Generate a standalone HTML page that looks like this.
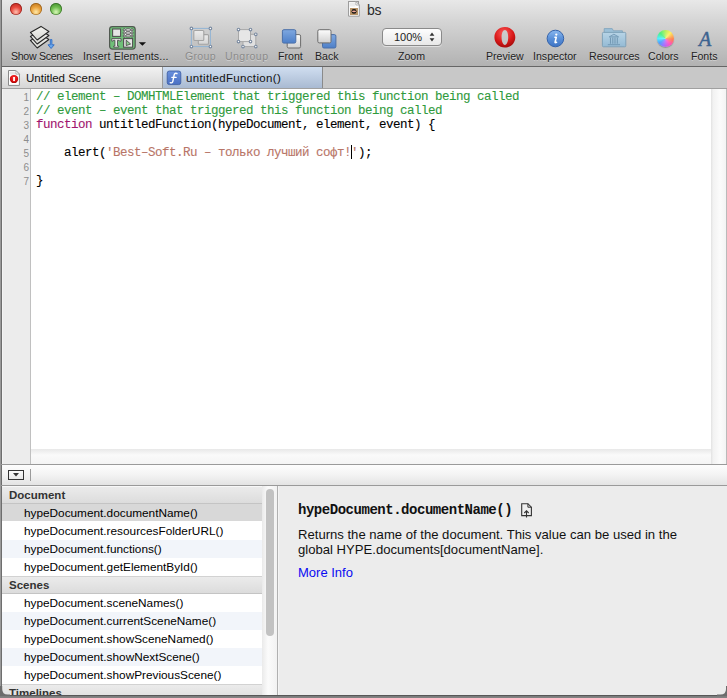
<!DOCTYPE html>
<html><head><meta charset="utf-8">
<style>
*{margin:0;padding:0;box-sizing:border-box}
html,body{width:727px;height:698px;overflow:hidden;background:#ececec;font-family:"Liberation Sans",sans-serif}
.a{position:absolute}
#tb{left:0;top:0;width:727px;height:66px;background:linear-gradient(#e8e8e8,#d6d6d6 30%,#b2b2b2)}
#tbl{left:0;top:66px;width:727px;height:1px;background:#666}
#tabs{left:0;top:67px;width:727px;height:21px;background:#c8c8c8}
#tabl{left:0;top:88px;width:727px;height:1px;background:#a0a0a0}
.lbl{font-size:10.6px;color:#222;white-space:nowrap;top:50px;line-height:12px;text-shadow:0 1px 0 rgba(255,255,255,.35)}
.dis{color:#8a8a8a}
#lb{left:0;top:0;width:2px;height:698px;background:linear-gradient(90deg,#9a9a9a 50%,#6e6e6e 50%)}
#gut{left:2px;top:89px;width:28px;height:375px;background:#ececec;border-left:1px solid #f4f4f4}
#gutb{left:30px;top:89px;width:1px;height:375px;background:#c0c0c0}
#code{left:31px;top:89px;width:680px;height:360px;background:#fff}
#vs{left:711px;top:89px;width:15px;height:375px;background:linear-gradient(90deg,#e2e2e2,#f2f2f2 15%,#fbfbfb 60%,#f4f4f4)}
#vsb{left:726px;top:89px;width:1px;height:375px;background:#bababa}
#hs{left:31px;top:449px;width:680px;height:15px;background:linear-gradient(#e8e8e8,#fafafa 40%,#f4f4f4)}
.ln{position:absolute;left:3px;width:26px;text-align:right;font-size:10px;color:#8c8c8c;font-family:"Liberation Sans",sans-serif}
.cl{position:absolute;left:36px;font-family:"Liberation Mono",monospace;font-size:12.5px;letter-spacing:-0.5px;white-space:pre;color:#000;-webkit-text-stroke:0.1px currentColor}
.cm{color:#2f9a3c}
.kw{color:#a1156f}
.st{color:#b87567}
#bl1{left:0;top:464px;width:727px;height:1px;background:#9a9a9a}
#bbar{left:2px;top:465px;width:725px;height:20px;background:linear-gradient(#fdfdfd,#f3f3f3 50%,#e4e4e4)}
#bl2{left:0;top:485px;width:727px;height:1px;background:#9a9a9a}
#list{left:2px;top:486px;width:260px;height:209px;background:#fff;overflow:hidden}
.hdr{position:absolute;left:0;width:260px;height:18px;background:linear-gradient(#ececec,#dcdcdc);box-shadow:inset 0 1px 0 #f8f8f8;border-bottom:1px solid #c4c4c4;font-weight:bold;font-size:11.5px;color:#333;padding-left:7px;line-height:18px}
.row{position:absolute;left:0;width:260px;height:18px;font-size:11.8px;color:#000;padding-left:22px;line-height:18px;white-space:nowrap}
.alt{background:#f2f5fa}
.sel{background:#d8d8d8}
#vs2{left:262px;top:486px;width:15px;height:209px;background:linear-gradient(90deg,#eaeaea,#fbfbfb 40%,#f2f2f2)}
#thumb{left:266px;top:489px;width:8px;height:147px;border-radius:4px;background:#c2c2c2}
#div{left:277px;top:486px;width:1px;height:209px;background:#b0b0b0}
#rp{left:278px;top:486px;width:449px;height:209px;background:#ececec;border-left:1px solid #f4f4f4}
#bot{left:0;top:695px;width:727px;height:3px;background:linear-gradient(#575757 33%,#7a7a7a 34%,#848484)}
</style></head><body>
<div class="a" id="tb"></div>
<div class="a" id="tbl"></div>
<div class="a" id="tabs"></div>
<div class="a" id="tabl"></div>

<!-- traffic lights -->
<div class="a" style="left:10px;top:3px;width:12px;height:12px;border-radius:50%;background:radial-gradient(circle at 50% 75%,#ffc0b0,#e84a3e 45%,#b01e14);box-shadow:inset 0 0 0 0.8px rgba(110,10,10,.6)"></div>
<div class="a" style="left:30px;top:3px;width:12px;height:12px;border-radius:50%;background:radial-gradient(circle at 50% 75%,#ffe9a8,#eaa23c 45%,#b06812);box-shadow:inset 0 0 0 0.8px rgba(120,70,10,.6)"></div>
<div class="a" style="left:50px;top:3px;width:12px;height:12px;border-radius:50%;background:radial-gradient(circle at 50% 75%,#d8f8b8,#70be50 45%,#347e22);box-shadow:inset 0 0 0 0.8px rgba(30,80,20,.6)"></div>

<!-- title -->
<div class="a" style="left:348px;top:1px;width:11px;height:15px;background:#fff;border:1px solid #999"></div>
<div class="a" style="left:367px;top:2px;font-size:14px;letter-spacing:-0.2px;color:#2a2a2a;line-height:17px">bs</div>

<!-- toolbar labels -->
<div class="a lbl" style="left:11px;letter-spacing:-0.3px">Show Scenes</div>
<div class="a lbl" style="left:83px;letter-spacing:0.18px">Insert Elements...</div>
<div class="a lbl dis" style="left:185px;letter-spacing:0.3px">Group</div>
<div class="a lbl dis" style="left:225px;letter-spacing:0.4px">Ungroup</div>
<div class="a lbl" style="left:278px">Front</div>
<div class="a lbl" style="left:315px">Back</div>
<div class="a lbl" style="left:398px">Zoom</div>
<div class="a lbl" style="left:486px">Preview</div>
<div class="a lbl" style="left:533px">Inspector</div>
<div class="a lbl" style="left:589px">Resources</div>
<div class="a lbl" style="left:648px">Colors</div>
<div class="a lbl" style="left:691px">Fonts</div>

<!-- tabs -->
<div class="a" style="left:2px;top:67px;width:160px;height:21px;background:linear-gradient(#f2f2f2,#d6d6d6)"></div>
<div class="a" style="left:162px;top:67px;width:1px;height:21px;background:#9a9a9a"></div>
<div class="a" style="left:163px;top:67px;width:159px;height:21px;background:linear-gradient(#d0def0,#a9bad2)"></div>
<div class="a" style="left:322px;top:67px;width:1px;height:21px;background:#8a8a8a"></div>
<div class="a" style="left:26px;top:70px;font-size:11.5px;line-height:16px;color:#111">Untitled Scene</div>
<div class="a" style="left:186px;top:70px;font-size:11.5px;line-height:16px;color:#111;letter-spacing:0.35px">untitledFunction()</div>

<div class="a" id="lb"></div>
<div class="a" id="gut"></div>
<div class="a" id="gutb"></div>
<div class="a" id="code"></div>
<div class="a" id="vs"></div>
<div class="a" id="hs"></div>
<div class="a" id="vsb"></div>

<div class="ln" style="top:92px">1</div>
<div class="ln" style="top:106px">2</div>
<div class="ln" style="top:120px">3</div>
<div class="ln" style="top:134px">4</div>
<div class="ln" style="top:148px">5</div>
<div class="ln" style="top:162px">6</div>
<div class="ln" style="top:176px">7</div>

<div class="cl cm" style="top:90px;line-height:14px">// element – DOMHTMLElement that triggered this function being called</div>
<div class="cl cm" style="top:104px;line-height:14px">// event – event that triggered this function being called</div>
<div class="cl" style="top:118px;line-height:14px"><span class="kw">function</span> untitledFunction(hypeDocument, element, event) {</div>
<div class="a" style="left:351px;top:145px;width:1px;height:14px;background:#000"></div>
<div class="cl" style="top:146px;line-height:14px">    alert(<span class="st">'Best–Soft.Ru – только лучший софт!'</span>);</div>
<div class="cl" style="top:174px;line-height:14px">}</div>

<div class="a" id="bl1"></div>
<div class="a" id="bbar"></div>
<div class="a" id="bl2"></div>

<div class="a" id="list">
 <div class="hdr" style="top:0">Document</div>
 <div class="row sel" style="top:18px;height:17px">hypeDocument.documentName()</div>
 <div class="row" style="top:36px">hypeDocument.resourcesFolderURL()</div>
 <div class="row alt" style="top:54px">hypeDocument.functions()</div>
 <div class="row" style="top:72px">hypeDocument.getElementById()</div>
 <div class="hdr" style="top:90px;box-shadow:inset 0 1px 0 #d2d2d2">Scenes</div>
 <div class="row" style="top:108px">hypeDocument.sceneNames()</div>
 <div class="row alt" style="top:126px">hypeDocument.currentSceneName()</div>
 <div class="row" style="top:144px">hypeDocument.showSceneNamed()</div>
 <div class="row alt" style="top:162px">hypeDocument.showNextScene()</div>
 <div class="row" style="top:180px">hypeDocument.showPreviousScene()</div>
 <div class="hdr" style="top:198px;box-shadow:inset 0 1px 0 #d2d2d2">Timelines</div>
</div>
<div class="a" id="vs2"></div>
<div class="a" id="thumb"></div>
<div class="a" id="div"></div>
<div class="a" id="rp"></div>
<div class="a" style="left:298px;top:502px;font-family:'Liberation Mono',monospace;font-weight:bold;font-size:14px;letter-spacing:-0.47px;line-height:16px;color:#111">hypeDocument.documentName()</div>
<div class="a" style="left:298px;top:527px;width:395px;font-size:13.1px;line-height:15px;color:#111">Returns the name of the document. This value can be used in the global HYPE.documents[documentName].</div>
<div class="a" style="left:298px;top:565px;font-size:13px;line-height:15px;color:#0a0af2">More Info</div>

<!-- ICONS -->
<svg class="a" style="left:26px;top:22px" width="32" height="30" viewBox="0 0 32 30">
 <defs><linearGradient id="lg1" x1="0" y1="0" x2="0" y2="1"><stop offset="0" stop-color="#f4f4f0"/><stop offset="1" stop-color="#d8d8d4"/></linearGradient></defs>
 <g stroke="#262626" stroke-width="1.1" stroke-linejoin="round" fill="url(#lg1)">
 <polygon points="15,12.4 22.9,17.5 11.2,26 4.4,18.4"/>
 <polygon points="15,8.4 22.9,13.5 11.2,22 4.4,14.4"/>
 <polygon points="15,4.4 22.9,9.5 11.2,18 4.4,10.4"/>
 </g>
 <path d="M24.3,17.6 h1.6 v5.2 h2.3 l-3.1,3.7 l-3.1,-3.7 h2.3 z" fill="#6aa8ee" stroke="#2f6cc4" stroke-width="0.9" stroke-linejoin="round"/>
</svg>

<svg class="a" style="left:104px;top:22px" width="46" height="30" viewBox="0 0 46 30">
 <rect x="5.6" y="4.6" width="25.6" height="22.5" rx="2.8" fill="#6fbf78" stroke="#505850" stroke-width="1.2"/>
 <rect x="8.6" y="7" width="8" height="7.4" fill="#e4e4e4" stroke="#505050" stroke-width="1.1"/>
 <rect x="19.8" y="6.7" width="8.8" height="8.2" rx="1.5" fill="#f2f2f2"/>
 <g fill="#f4f4f4" stroke="#4a4a4a" stroke-width="0.9"><rect x="21.8" y="6.8" width="4.6" height="2.2" rx="0.9"/><rect x="21.8" y="9.85" width="4.6" height="2.2" rx="0.9"/><rect x="21.8" y="12.9" width="4.6" height="2" rx="0.9"/></g>
 <g fill="#f4f4f4" stroke="#4a4a4a" stroke-width="0.9"><circle cx="20.2" cy="7.8" r="1.1"/><circle cx="20.2" cy="10.9" r="1.1"/><circle cx="20.2" cy="14" r="1.1"/><circle cx="28" cy="7.8" r="1.1"/><circle cx="28" cy="10.9" r="1.1"/><circle cx="28" cy="14" r="1.1"/></g>
 <path d="M7.8,16.6 h9.2 v2.6 h-1.4 l-0.5,-0.9 h-1.6 v5.7 h1.2 v1.2 h-5 v-1.2 h1.2 v-5.7 h-1.6 l-0.5,0.9 h-1 z" fill="#ececec" stroke="#505050" stroke-width="0.9" stroke-linejoin="round"/>
 <rect x="19.6" y="16.6" width="9" height="8.6" fill="#e6e6e6" stroke="#505050" stroke-width="1.1"/>
 <path d="M22.2,18.2 v5.4 l4.4,-1.6 z" fill="#8fd090" stroke="#404040" stroke-width="0.8"/>
 <path d="M34.8,20.2 h7.2 l-3.6,3.6 z" fill="#111"/>
</svg>

<svg class="a" style="left:188px;top:25px" width="26" height="25" viewBox="0 0 26 25">
 <defs><linearGradient id="gg" x1="0" y1="0" x2="0" y2="1"><stop offset="0" stop-color="#ececec"/><stop offset="1" stop-color="#d4d4d4"/></linearGradient></defs>
 <rect x="3.4" y="3.4" width="19" height="18.2" fill="none" stroke="#92b4d4" stroke-width="1"/>
 <rect x="10.3" y="9.6" width="10.2" height="9.7" rx="1" fill="url(#gg)" stroke="#a4a4a4" stroke-width="1.1"/>
 <rect x="5.8" y="5.5" width="10" height="10" rx="1" fill="url(#gg)" stroke="#a4a4a4" stroke-width="1.1"/>
 <g fill="#fff" stroke="#7a8aa0" stroke-width="1.1"><circle cx="3.4" cy="3.4" r="1.3"/><circle cx="22.4" cy="3.4" r="1.3"/><circle cx="3.4" cy="21.6" r="1.3"/><circle cx="22.4" cy="21.6" r="1.3"/></g>
</svg>

<svg class="a" style="left:235px;top:25px" width="24" height="25" viewBox="0 0 24 25">
 <rect x="8" y="9.3" width="12.8" height="12.3" fill="#e0e0e0" stroke="#a8a8a8" stroke-width="1"/>
 <rect x="3.5" y="4.6" width="12" height="12" fill="#e6e6e6" stroke="#a8a8a8" stroke-width="1"/>
 <g fill="#fff" stroke="#7a8aa0" stroke-width="1.1"><circle cx="3.5" cy="4.6" r="1.3"/><circle cx="15.5" cy="4.6" r="1.3"/><circle cx="3.5" cy="16.6" r="1.3"/><circle cx="15.5" cy="16.6" r="1.3"/><circle cx="20.8" cy="9.3" r="1.3"/><circle cx="8" cy="21.6" r="1.3"/><circle cx="20.8" cy="21.6" r="1.3"/></g>
</svg>

<svg class="a" style="left:278px;top:26px" width="26" height="25" viewBox="0 0 26 25">
 <defs>
  <linearGradient id="wg" x1="0" y1="0" x2="0" y2="1"><stop offset="0" stop-color="#fdfdfd"/><stop offset="1" stop-color="#d0d0d0"/></linearGradient>
  <linearGradient id="bg" x1="0" y1="0" x2="0" y2="1"><stop offset="0" stop-color="#7fa8e0"/><stop offset="1" stop-color="#4d7fc8"/></linearGradient>
 </defs>
 <rect x="9.2" y="8.6" width="13.4" height="13.4" rx="1.5" fill="url(#wg)" stroke="#6c6c6c" stroke-width="1"/>
 <rect x="4.4" y="3.7" width="13.4" height="13.4" rx="1.5" fill="url(#bg)" stroke="#4a6fa8" stroke-width="1"/>
</svg>
<svg class="a" style="left:313px;top:26px" width="26" height="25" viewBox="0 0 26 25">
 <rect x="9.5" y="8.6" width="13.4" height="13.4" rx="1.5" fill="url(#bg)" stroke="#4a6fa8" stroke-width="1"/>
 <rect x="4.8" y="3.7" width="13.2" height="13.2" rx="1.5" fill="url(#wg)" stroke="#6c6c6c" stroke-width="1"/>
</svg>

<div class="a" style="left:382px;top:28px;width:60px;height:18px;border:1px solid #8a8a8a;border-radius:4px;background:linear-gradient(#fdfdfd,#e8e8e8);box-shadow:0 1px 0 rgba(255,255,255,.5)"></div>
<div class="a" style="left:394px;top:31px;font-size:11px;line-height:12px;color:#222">100%</div>
<svg class="a" style="left:428px;top:31px" width="8" height="12" viewBox="0 0 8 12"><path d="M1.6,4.8 L4,1.6 L6.4,4.8 z M1.6,7.2 L4,10.4 L6.4,7.2 z" fill="#333"/></svg>

<svg class="a" style="left:492px;top:26px" width="26" height="24" viewBox="0 0 26 24">
 <defs><radialGradient id="og" cx="0.45" cy="0.3" r="0.75"><stop offset="0" stop-color="#ff5a5a"/><stop offset="0.6" stop-color="#d81818"/><stop offset="1" stop-color="#9a0a0a"/></radialGradient></defs>
 <path fill-rule="evenodd" fill="url(#og)" d="M12.9,1.1 C19,1.1 23.3,5.6 23.3,11.3 C23.3,17 19,21.6 12.9,21.6 C6.8,21.6 2.4,17 2.4,11.3 C2.4,5.6 6.8,1.1 12.9,1.1 Z M12.9,4 C10.9,4 9.6,7.2 9.6,11.3 C9.6,15.4 10.9,18.9 12.9,18.9 C14.9,18.9 16.2,15.4 16.2,11.3 C16.2,7.2 14.9,4 12.9,4 Z"/>
</svg>

<svg class="a" style="left:545px;top:28px" width="22" height="22" viewBox="0 0 22 22">
 <defs><linearGradient id="ig" x1="0" y1="0" x2="0" y2="1"><stop offset="0" stop-color="#8ab8f0"/><stop offset="0.5" stop-color="#5a90d8"/><stop offset="1" stop-color="#3e74c4"/></linearGradient></defs>
 <circle cx="10.4" cy="10.5" r="8.3" fill="url(#ig)" stroke="#3563aa" stroke-width="1"/>
 <circle cx="11.3" cy="6.6" r="1.15" fill="#fff"/><path d="M9.9,9.3 H11.3 L10.1,14 Q9.8,15.1 11.6,14.3" fill="none" stroke="#fff" stroke-width="1.5" stroke-linecap="round" stroke-linejoin="round"/>
</svg>

<svg class="a" style="left:598px;top:24px" width="32" height="26" viewBox="0 0 32 26">
 <defs><linearGradient id="fg" x1="0" y1="0" x2="0" y2="1"><stop offset="0" stop-color="#b8d4e6"/><stop offset="1" stop-color="#94bad4"/></linearGradient></defs>
 <path d="M6.2,4.6 h8 l1.2,2.2 h9 v3 h-18.2 z" fill="#9cc0d8" stroke="#7ea2ba" stroke-width="0.8"/>
 <rect x="4.4" y="8.4" width="23.4" height="14.4" rx="1" fill="url(#fg)" stroke="#7a9eb6" stroke-width="0.9"/>
 <g stroke="#7399b4" fill="none"><path d="M11.2,12.9 L15.9,10.2 L20.6,12.9 z" stroke-width="0.9" fill="#a4c4da"/><path d="M12.5,13.6 v6.2 M14.8,13.6 v6.2 M17,13.6 v6.2 M19.3,13.6 v6.2" stroke-width="1.1"/><path d="M9.8,20.7 h12.2" stroke-width="1"/></g>
</svg>

<div class="a" style="left:657px;top:30px;width:17px;height:17px;border-radius:50%;background:conic-gradient(#b8f060 0deg,#fff060 40deg,#ff8050 95deg,#ff50c8 145deg,#a070ff 195deg,#50a0ff 235deg,#50f0ff 270deg,#50f080 315deg,#b8f060 360deg);box-shadow:0 1px 1px rgba(0,0,0,.25)"></div>
<div class="a" style="left:657px;top:30px;width:17px;height:17px;border-radius:50%;background:radial-gradient(circle at 50% 50%,rgba(255,255,255,.25),rgba(255,255,255,0) 60%)"></div>

<div class="a" style="left:699px;top:27px;font-family:'Liberation Serif',serif;font-style:italic;font-weight:normal;font-size:20px;-webkit-text-stroke:0.5px #3d6390;line-height:24px;color:#3d6390">A</div>

<svg class="a" style="left:344px;top:0" width="20" height="20" viewBox="0 0 20 20">
 <path d="M4.6,1.5 h7.2 l3.5,3.5 v11.2 h-10.7 z" fill="#fff" stroke="#9a9a9a" stroke-width="1"/>
 <path d="M11.8,1.5 l3.5,3.5 h-3.5 z" fill="#fdfdfd" stroke="#a0a0a0" stroke-width="0.8"/><rect x="5.6" y="2.5" width="5.6" height="4" fill="#ececec"/>
 <rect x="6" y="8" width="8" height="7" fill="#b89468"/>
 <ellipse cx="10" cy="11.4" rx="2.5" ry="2.3" fill="#141414"/>
 <ellipse cx="10" cy="11.4" rx="2" ry="0.8" fill="#f0a898"/>
</svg>

<svg class="a" style="left:4px;top:66px" width="20" height="22" viewBox="0 0 20 22">
 <defs><radialGradient id="tog" cx="0.5" cy="0.35" r="0.7"><stop offset="0" stop-color="#ff3030"/><stop offset="0.7" stop-color="#d40a0a"/><stop offset="1" stop-color="#8e0404"/></radialGradient></defs>
 <path d="M4.5,4.5 h7.3 l3.6,3.6 v11.3 h-10.9 z" fill="#fff" stroke="#8a8a8a" stroke-width="1"/>
 <path d="M11.8,4.5 l3.6,3.6 h-3.6 z" fill="#fdfdfd" stroke="#9a9a9a" stroke-width="0.8"/>
 <rect x="5.6" y="5.6" width="5.6" height="3" fill="#e6e6e6"/>
 <ellipse cx="10" cy="13" rx="4.2" ry="4.1" fill="url(#tog)"/>
 <rect x="9.15" y="11" width="1.8" height="4.1" fill="#fff"/>
</svg>

<svg class="a" style="left:166px;top:70px" width="16" height="16" viewBox="0 0 16 16">
 <defs><linearGradient id="fgr" x1="0" y1="0" x2="0" y2="1"><stop offset="0" stop-color="#6a90dc"/><stop offset="1" stop-color="#4a70c4"/></linearGradient></defs>
 <rect x="1.2" y="1" width="13.6" height="13.6" rx="2.2" fill="url(#fgr)" stroke="#3a5aa0" stroke-width="0.8"/>
 <path d="M11,3.6 C9.8,2.9 8.5,3.3 8.1,5.2 L6.9,11.2 C6.6,12.7 5.7,13.2 4.2,12.7 M5.9,7.4 H10.1" fill="none" stroke="#fff" stroke-width="1.4" stroke-linecap="round"/>
</svg>

<div class="a" style="left:8px;top:470px;width:16px;height:10px;border:1.3px solid #333;background:linear-gradient(#fafafa,#e8e8e8)"></div>
<svg class="a" style="left:12px;top:472px" width="8" height="6" viewBox="0 0 8 6"><path d="M1,1 h6 l-3,3.4 z" fill="#333"/></svg>
<div class="a" style="left:30px;top:469px;width:1px;height:12px;background:#9a9a9a"></div>

<svg class="a" style="left:518px;top:500px" width="18" height="20" viewBox="0 0 18 20">
 <path d="M3.7,3.7 h6.2 l3.5,3.5 v8.4 h-9.7 z" fill="#efefef" stroke="#333" stroke-width="1.1" stroke-linejoin="miter"/>
 <path d="M9.9,3.7 v3.5 h3.5" fill="none" stroke="#333" stroke-width="1"/>
 <path d="M8.5,17.5 v-6.6 M6.3,13 l2.2,-2.2 l2.2,2.2" fill="none" stroke="#333" stroke-width="1.1"/>
</svg>

<div class="a" id="bot"></div>
<svg class="a" style="left:0;top:686px" width="10" height="10" viewBox="0 0 10 10"><path d="M0,0 H2.2 V3 Q2.2,8.6 7.8,8.6 H10 V10 H0 Z" fill="#6c6c6c"/></svg>
<svg class="a" style="left:717px;top:686px" width="10" height="10" viewBox="0 0 10 10"><path d="M10,0 H9 V3 Q9,8.6 3.4,8.6 H0 V10 H10 Z" fill="#6c6c6c"/></svg>

</body></html>
